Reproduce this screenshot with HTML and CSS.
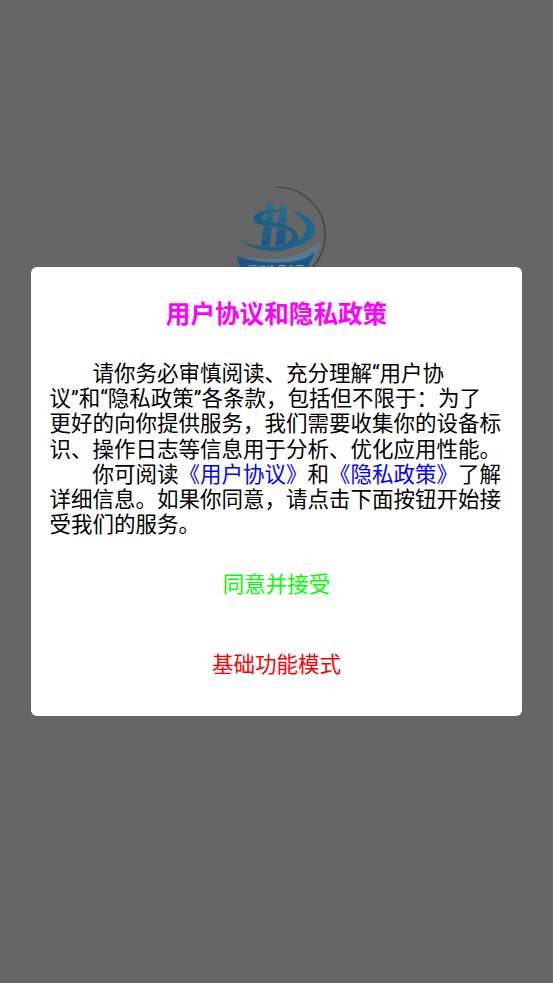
FILE: index.html
```html
<!DOCTYPE html>
<html lang="zh-CN">
<head>
<meta charset="utf-8">
<title>用户协议和隐私政策</title>
<link rel="stylesheet" href="styles.css">
</head>
<body>
<main class="splash">
  <svg class="logo" viewBox="0 0 100 90" width="100" height="90" aria-hidden="true">
    <defs>
      <linearGradient id="pillar" x1="0" y1="0" x2="0" y2="1">
        <stop offset="0" stop-color="#1b7894"/>
        <stop offset="1" stop-color="#1d4f8c"/>
      </linearGradient>
    </defs>
    <path d="M46 7 A48 48 0 0 1 82 88" fill="none" stroke="#3d3d3d" stroke-width="1.2"/>
    <path d="M7 76 C30 82 62 80 78 70 C84 66 88 63 90 60 C90 72 82 84 76 90 L11 90 C9 85 8 80 7 76Z" fill="#557a92"/>
    <path d="M7 76 C32 85 60 84 76 78 C80 76 83 74 85 72 C83 79 79 85 76 90 L11 90 C9 85 8 80 7 76Z" fill="#1d5488"/>
    <path d="M38 21 L44 26 L40 66 L31 66Z M50 24 L57 28 L55 69 L45 69Z" fill="url(#pillar)"/>
    <path d="M58 30 C44 28 24 30 23 38 C22 46 38 47 50 48 C62 50 66 56 58 62 C46 70 22 66 8 59 C20 70 46 76 60 68 C74 60 70 50 54 44 C44 41 30 41 32 37 C34 33 48 32 58 30Z" fill="#1a5f84" stroke="#666666" stroke-width="0.8"/>
    <path d="M60 31 C76 33 86 42 85 50 C84 60 70 68 52 69 C64 64 76 58 76 48 C76 40 68 34 60 31Z" fill="#1c688c"/>
    <text class="logo-text" x="18" y="93">网络通 用全面</text>
  </svg>
</main>
<div class="scrim">
  <section class="dialog" role="dialog" aria-labelledby="dialog-title">
    <h1 class="title" id="dialog-title">用户协议和隐私政策</h1>
    <div class="body">
      <p class="para">　　请你务必审慎阅读、充分理解“用户协<br>议”和“隐私政策”各条款，包括但不限于：为了更好的向你提供服务，我们需要收集你的设备标识、操作日志等信息用于分析、优化应用性能。</p>
      <p class="para">　　你可阅读<a class="link" href="#">《用户协议》</a>和<a class="link" href="#">《隐私政策》</a>了解详细信息。如果你同意，请点击下面按钮开始接受我们的服务。</p>
    </div>
    <button class="action accept" type="button">同意并接受</button>
    <button class="action basic" type="button">基础功能模式</button>
  </section>
</div>
</body>
</html>
```
FILE: styles.css
```css
* { box-sizing: border-box; }
html, body { margin: 0; height: 100%; }
body {
  width: 553px;
  height: 983px;
  overflow: hidden;
  position: relative;
  background: #666666;
  font-family: Roboto, "Noto Sans CJK SC", sans-serif;
}
.splash {
  display: flex;
  justify-content: center;
  padding: 180px 0 0 7px;
}
.logo { display: block; }
.logo-text { font-size: 9px; fill: #8fa4b4; }
.scrim {
  position: absolute;
  inset: 0;
  display: flex;
  align-items: center;
  justify-content: center;
}
.dialog {
  width: 491px;
  height: 449px;
  background: #ffffff;
  border-radius: 6px;
  display: flex;
  flex-direction: column;
  align-items: stretch;
}
.title {
  margin: 30px 0 0;
  font-size: 24.6px;
  line-height: 35px;
  font-weight: 700;
  text-align: center;
  color: #ff00ff;
}
.body {
  margin: 29px 20px 0 18.5px;
  font-size: 21.5px;
  line-height: 25.2px;
  color: #000000;
}
.para { margin: 0; }
.link { color: #0000ff; text-decoration: none; }
.action {
  border: 0;
  background: none;
  padding: 0;
  font: inherit;
  font-size: 21.5px;
  line-height: 30px;
  text-align: center;
}
.accept { margin-top: 33px; color: #00ff00; }
.basic { margin-top: 50px; color: #ff0000; }
```
